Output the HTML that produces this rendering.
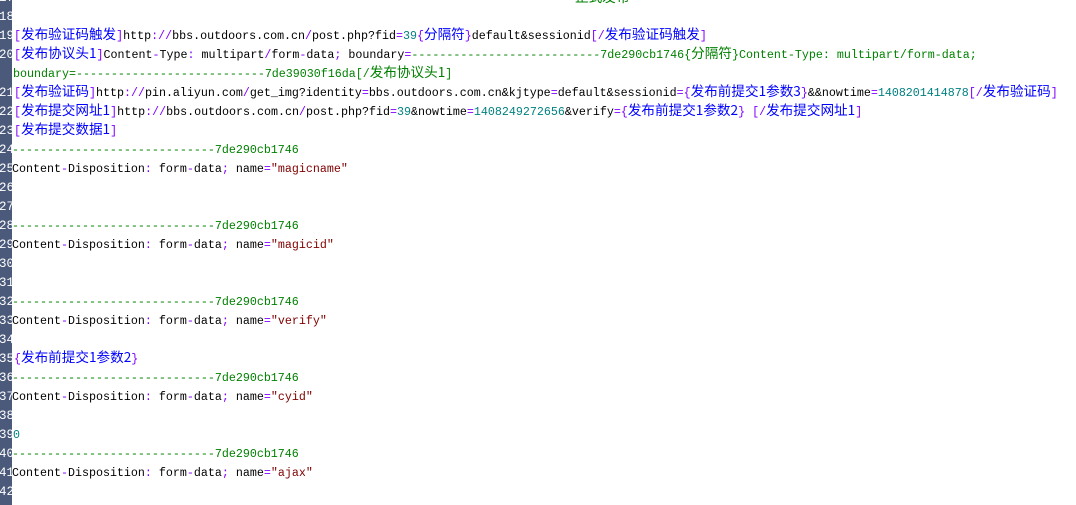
<!DOCTYPE html>
<html><head><meta charset="utf-8"><style>
body{margin:0;width:1076px;height:505px;overflow:hidden;background:#fff;position:relative;font-family:"Liberation Mono","WenQuanYi Zen Hei",monospace;font-size:11.67px;color:#000}
.gut{position:absolute;left:0;top:0;width:12px;height:505px;background:#4b5a7b;overflow:hidden}
.n{position:absolute;right:-2px;color:#fff;font-size:12.5px;line-height:19px;white-space:nowrap}
.l{position:absolute;left:12px;line-height:19px;white-space:pre;height:19px}
.c{font-family:"WenQuanYi Zen Hei","Noto Sans CJK SC",sans-serif;font-size:13.6px;line-height:0}
.p{color:#8000ff}.b{color:#0000ff}.g{color:#008000}.t{color:#008080}.r{color:#800000}
</style></head><body>
<div class="gut">
<div class="n" style="top:-11px">17</div><div class="n" style="top:8px">18</div><div class="n" style="top:27px">19</div><div class="n" style="top:46px">20</div><div class="n" style="top:84px">21</div><div class="n" style="top:103px">22</div><div class="n" style="top:122px">23</div><div class="n" style="top:141px">24</div><div class="n" style="top:160px">25</div><div class="n" style="top:179px">26</div><div class="n" style="top:198px">27</div><div class="n" style="top:217px">28</div><div class="n" style="top:236px">29</div><div class="n" style="top:255px">30</div><div class="n" style="top:274px">31</div><div class="n" style="top:293px">32</div><div class="n" style="top:312px">33</div><div class="n" style="top:331px">34</div><div class="n" style="top:350px">35</div><div class="n" style="top:369px">36</div><div class="n" style="top:388px">37</div><div class="n" style="top:407px">38</div><div class="n" style="top:426px">39</div><div class="n" style="top:445px">40</div><div class="n" style="top:464px">41</div><div class="n" style="top:483px">42</div>
</div>
<div class="l g" style="left:575px;top:-10px"><span class="c">正式发布</span></div>
<div class="l" style="left:14px;top:27px"><span class="p">[</span><span class="b c">发布验证码触发</span><span class="p">]</span>http<span class="p">://</span>bbs.outdoors.com.cn<span class="p">/</span>post.php?fid<span class="p">=</span><span class="t">39</span><span class="p">{</span><span class="b c">分隔符</span><span class="p">}</span>default&amp;sessionid<span class="p">[/</span><span class="b c">发布验证码触发</span><span class="p">]</span></div>
<div class="l" style="left:14px;top:46px"><span class="p">[</span><span class="b c">发布协议头1</span><span class="p">]</span>Content<span class="p">-</span>Type<span class="p">:</span> multipart<span class="p">/</span>form<span class="p">-</span>data<span class="p">;</span> boundary<span class="p">=</span><span class="g">---------------------------7de290cb1746</span><span class="g">{</span><span class="g c">分隔符</span><span class="g">}Content-Type: multipart/form-data;</span></div>
<div class="l g" style="left:13px;top:65px">boundary=---------------------------7de39030f16da[/<span class="c">发布协议头1</span>]</div>
<div class="l" style="left:14px;top:84px"><span class="p">[</span><span class="b c">发布验证码</span><span class="p">]</span>http<span class="p">://</span>pin.aliyun.com<span class="p">/</span>get_img?identity<span class="p">=</span>bbs.outdoors.com.cn&amp;kjtype<span class="p">=</span>default&amp;sessionid<span class="p">=</span><span class="p">{</span><span class="b c">发布前提交1参数3</span><span class="p">}</span>&amp;&amp;nowtime<span class="p">=</span><span class="t">1408201414878</span><span class="p">[/</span><span class="b c">发布验证码</span><span class="p">]</span></div>
<div class="l" style="left:14px;top:103px"><span class="p">[</span><span class="b c">发布提交网址1</span><span class="p">]</span>http<span class="p">://</span>bbs.outdoors.com.cn<span class="p">/</span>post.php?fid<span class="p">=</span><span class="t">39</span>&amp;nowtime<span class="p">=</span><span class="t">1408249272656</span>&amp;verify<span class="p">=</span><span class="p">{</span><span class="b c">发布前提交1参数2</span><span class="p">}</span> <span class="p">[/</span><span class="b c">发布提交网址1</span><span class="p">]</span></div>
<div class="l" style="left:14px;top:122px"><span class="p">[</span><span class="b c">发布提交数据1</span><span class="p">]</span></div>
<div class="l g" style="top:141px">-----------------------------7de290cb1746</div>
<div class="l" style="top:160px">Content<span class="p">-</span>Disposition<span class="p">:</span> form<span class="p">-</span>data<span class="p">;</span> name<span class="p">=</span><span class="r">"magicname"</span></div>
<div class="l g" style="top:217px">-----------------------------7de290cb1746</div>
<div class="l" style="top:236px">Content<span class="p">-</span>Disposition<span class="p">:</span> form<span class="p">-</span>data<span class="p">;</span> name<span class="p">=</span><span class="r">"magicid"</span></div>
<div class="l g" style="top:293px">-----------------------------7de290cb1746</div>
<div class="l" style="top:312px">Content<span class="p">-</span>Disposition<span class="p">:</span> form<span class="p">-</span>data<span class="p">;</span> name<span class="p">=</span><span class="r">"verify"</span></div>
<div class="l" style="left:14px;top:350px"><span class="p">{</span><span class="b c">发布前提交1参数2</span><span class="p">}</span></div>
<div class="l g" style="top:369px">-----------------------------7de290cb1746</div>
<div class="l" style="top:388px">Content<span class="p">-</span>Disposition<span class="p">:</span> form<span class="p">-</span>data<span class="p">;</span> name<span class="p">=</span><span class="r">"cyid"</span></div>
<div class="l t" style="left:13px;top:426px">0</div>
<div class="l g" style="top:445px">-----------------------------7de290cb1746</div>
<div class="l" style="top:464px">Content<span class="p">-</span>Disposition<span class="p">:</span> form<span class="p">-</span>data<span class="p">;</span> name<span class="p">=</span><span class="r">"ajax"</span></div>
</body></html>
